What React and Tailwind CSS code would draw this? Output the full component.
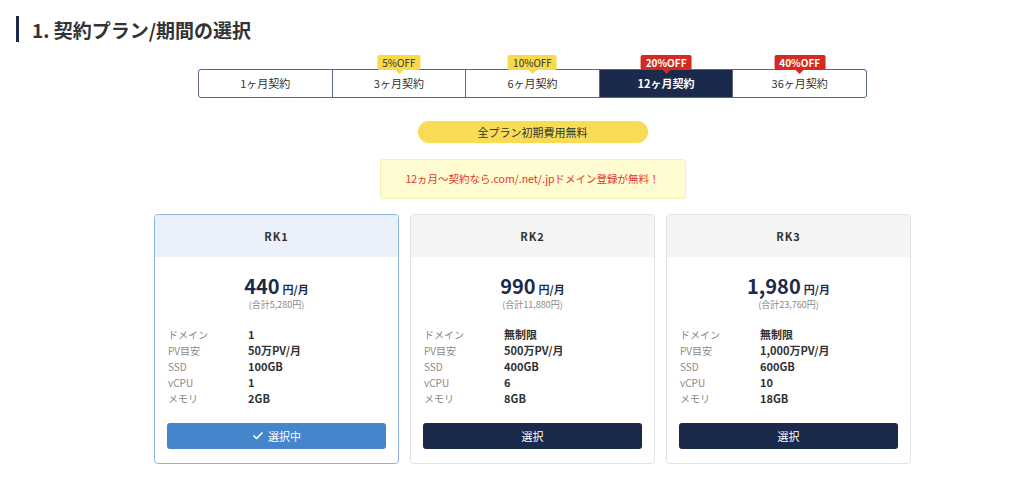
import React from "react";
import { Check } from "lucide-react";

const tabs = [
  { label: "1ヶ月契約" },
  { label: "3ヶ月契約", badge: "5%OFF", tone: "yellow" },
  { label: "6ヶ月契約", badge: "10%OFF", tone: "yellow" },
  { label: "12ヶ月契約", badge: "20%OFF", tone: "red", active: true },
  { label: "36ヶ月契約", badge: "40%OFF", tone: "red" },
];

const plans = [
  {
    name: "RK1",
    price: "440",
    total: "(合計5,280円)",
    specs: ["1", "50万PV/月", "100GB", "1", "2GB"],
    selected: true,
  },
  {
    name: "RK2",
    price: "990",
    total: "(合計11,880円)",
    specs: ["無制限", "500万PV/月", "400GB", "6", "8GB"],
  },
  {
    name: "RK3",
    price: "1,980",
    total: "(合計23,760円)",
    specs: ["無制限", "1,000万PV/月", "600GB", "10", "18GB"],
  },
];

const labels = ["ドメイン", "PV目安", "SSD", "vCPU", "メモリ"];

const App = () => {
  return (
    <div className="w-[1024px] h-[486px] bg-white font-['Noto_Sans_CJK_JP',sans-serif] text-[#333]">
      {/* Heading */}
      <div className="pt-4 pl-4 flex items-center h-[42px]">
        <div className="w-[3px] h-[26px] bg-[#1b2a4a]" />
        <h2 className="ml-[13px] text-[19px] font-bold leading-none text-[#333]">
          1. 契約プラン/期間の選択
        </h2>
      </div>

      <div className="flex flex-col items-center pl-[41px]">
        {/* Term tabs */}
        <div className="mt-[27px] w-[669px] h-[29px] flex border border-[#5b6584] rounded-[3px]">
          {tabs.map((t, i) => (
            <div
              key={t.label}
              className={`relative flex-1 flex items-center justify-center text-[11px] ${
                i > 0 ? "border-l border-[#5b6584]" : ""
              } ${t.active ? "bg-[#1b2a4a] text-white font-bold" : "text-[#333]"} ${
                i === 0 ? "rounded-l-[2px]" : ""
              } ${i === tabs.length - 1 ? "rounded-r-[2px]" : ""}`}
            >
              {t.badge && (
                <div className="absolute -top-[15px] left-1/2 -translate-x-1/2">
                  <div
                    className={`relative h-[15px] px-[5px] flex items-center rounded-[2px] text-[10px] leading-none whitespace-nowrap ${
                      t.tone === "yellow"
                        ? "bg-[#f8d949] text-[#333] font-normal"
                        : "bg-[#d42a20] text-white font-bold"
                    }`}
                  >
                    {t.badge}
                    <span
                      className={`absolute left-1/2 -translate-x-1/2 top-full w-0 h-0 border-l-[4px] border-r-[4px] border-t-[4px] border-l-transparent border-r-transparent ${
                        t.tone === "yellow" ? "border-t-[#f8d949]" : "border-t-[#d42a20]"
                      }`}
                    />
                  </div>
                </div>
              )}
              {t.label}
            </div>
          ))}
        </div>

        {/* Free setup pill */}
        <div className="mt-[23px] w-[230px] h-[22px] rounded-full bg-[#f9dc55] flex items-center justify-center text-[11px] text-[#333]">
          全プラン初期費用無料
        </div>

        {/* Domain notice */}
        <div className="mt-4 w-[306px] h-[40px] bg-[#fffcd2] border border-[#f6efb4] rounded-[3px] flex items-center justify-center text-[10.5px] text-[#e0392b]">
          12ヵ月〜契約なら.com/.net/.jpドメイン登録が無料！
        </div>

        {/* Plan cards */}
        <div className="mt-[15px] flex gap-[11px]">
          {plans.map((p) => (
            <div
              key={p.name}
              className={`w-[245px] h-[250px] rounded-[4px] border overflow-hidden flex flex-col ${
                p.selected ? "border-[#8cb5e6]" : "border-[#e2e2e2]"
              }`}
            >
              <div
                className={`h-[42px] shrink-0 flex items-center justify-center text-[11px] font-bold tracking-[1px] text-[#333] ${
                  p.selected ? "bg-[#eaf1fb]" : "bg-[#f4f4f4]"
                }`}
              >
                {p.name}
              </div>
              <div className="pt-[17px] flex flex-col items-center">
                <div className="h-6 flex items-baseline text-[#1b2a4a] font-bold">
                  <span className="text-[20px] leading-6">{p.price}</span>
                  <span className="ml-[3px] text-[11px]">円/月</span>
                </div>
                <div className="h-[13px] text-[9px] leading-[13px] text-[#888]">{p.total}</div>
              </div>
              <div className="mt-[15px] px-[13px]">
                {labels.map((l, i) => (
                  <div key={l} className="h-4 flex items-center">
                    <span className="w-[80px] text-[10px] text-[#888]">{l}</span>
                    <span className="text-[11px] font-bold text-[#333]">{p.specs[i]}</span>
                  </div>
                ))}
              </div>
              <div className="mt-[17px] px-3">
                <button
                  className={`w-full h-[26px] rounded-[3px] flex items-center justify-center gap-1 text-[11px] text-white ${
                    p.selected ? "bg-[#4585cc]" : "bg-[#1b2a4a]"
                  }`}
                >
                  {p.selected && <Check size={12} strokeWidth={3.5} />}
                  {p.selected ? "選択中" : "選択"}
                </button>
              </div>
            </div>
          ))}
        </div>
      </div>
    </div>
  );
};

export default App;
